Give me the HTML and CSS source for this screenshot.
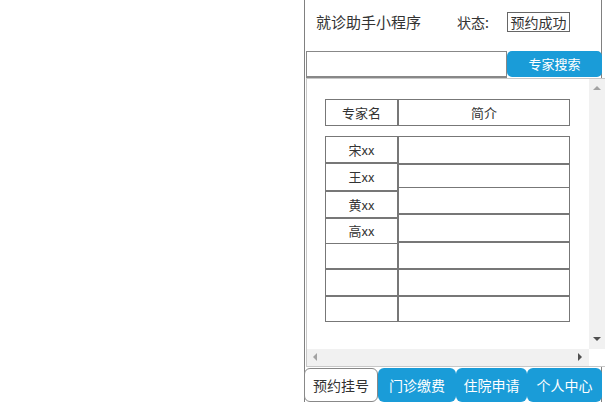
FILE: index.html
```html
<!DOCTYPE html>
<html lang="zh">
<head>
<meta charset="utf-8">
<title>就诊助手小程序</title>
<link rel="stylesheet" href="styles.css">
</head>
<body>
<div class="frame">
  <div class="header">
    <span class="title">就诊助手小程序</span>
    <span class="status-label">状态:</span>
    <span class="status-box">预约成功</span>
  </div>
  <div class="search">
    <input class="search-input" type="text">
    <button class="search-btn">专家搜索</button>
  </div>
  <div class="scroll">
    <div class="content">
      <div class="thead">
        <div class="cell c1 h">专家名</div>
        <div class="cell c2 h">简介</div>
      </div>
      <div class="tbody">
        <div class="col col1">
          <div class="cell r27">宋xx</div>
          <div class="cell r28">王xx</div>
          <div class="cell r27">黄xx</div>
          <div class="cell r26">高xx</div>
          <div class="cell r26 thin"></div>
          <div class="cell r27"></div>
          <div class="cell r26"></div>
        </div>
        <div class="col col2">
          <div class="cell r28"></div>
          <div class="cell r24"></div>
          <div class="cell r27 thin"></div>
          <div class="cell r28"></div>
          <div class="cell r27"></div>
          <div class="cell r27"></div>
          <div class="cell r26"></div>
        </div>
      </div>
    </div>
    <div class="vbar">
      <svg width="16" height="16" viewBox="0 0 16 16"><polygon points="4,10 12,10 8,6" fill="#a3a3a3"/></svg>
      <svg width="16" height="16" viewBox="0 0 16 16"><polygon points="4,6 12,6 8,10" fill="#505050"/></svg>
    </div>
    <div class="hbar">
      <svg width="16" height="17" viewBox="0 0 16 17"><polygon points="10,4 10,12 6,8" fill="#a3a3a3"/></svg>
      <svg width="16" height="17" viewBox="0 0 16 17"><polygon points="6,4 6,12 10,8" fill="#505050"/></svg>
    </div>
    <div class="corner"></div>
  </div>
  <div class="tabs">
    <div class="tab active t1">预约挂号</div>
    <div class="tab t2">门诊缴费</div>
    <div class="tab t3">住院申请</div>
    <div class="tab t4">个人中心</div>
  </div>
</div>
</body>
</html>
```
FILE: styles.css
```css
* { box-sizing: border-box; }
html, body { margin: 0; padding: 0; background: #fff; }
body {
  font-family: "Noto Sans CJK SC", "Liberation Sans", sans-serif;
  color: #333;
  width: 606px;
  height: 402px;
  overflow: hidden;
}
.frame {
  margin-left: 304px;
  width: 298px;
  height: 402px;
  border-left: 1px solid #808080;
  border-right: 1px solid #808080;
  display: flex;
  flex-direction: column;
}
.header {
  height: 51px;
  display: flex;
  align-items: flex-start;
  padding: 12px 0 0 11px;
  font-size: 14px;
  line-height: 20px;
}
.title { font-size: 15px; width: 141px; }
.status-label { width: 50px; }
.status-box {
  border: 1px solid #666;
  height: 20px;
  width: 63px;
  line-height: 18px;
  font-size: 14px;
  text-align: center;
}
.search {
  display: flex;
  height: 26px;
  margin-right: -1px;
}
.search-input {
  margin: 0 0 0 1px;
  width: 201px;
  height: 27px;
  border: 1px solid #888;
  border-bottom-width: 2px;
  padding: 0;
  outline: none;
}
.search-btn {
  flex: 1;
  height: 26px;
  border: none;
  border-radius: 5px;
  background: #1a9cd8;
  color: #fff;
  font-family: inherit;
  font-size: 13px;
  padding: 0;
}
.scroll {
  margin-top: 1px;
  margin-left: 1px;
  margin-right: -4px;
  height: 290px;
  border: 1px solid #c8c8c8;
  border-right: none;
  overflow: hidden;
  position: relative;
  background: #fff;
  display: grid;
  grid-template-columns: 1fr 16px;
  grid-template-rows: 1fr 17px;
}
.content { padding: 20px 0 0 18px; overflow: hidden; }
.vbar {
  background: #f1f1f1;
  display: flex;
  flex-direction: column;
  justify-content: space-between;
  padding: 1px 0 2px;
}
.vbar svg, .hbar svg { display: block; }
.hbar {
  background: #f1f1f1;
  display: flex;
  justify-content: space-between;
  padding: 0 1px 0 0;
}
.corner { background: #fff; }
.thead, .tbody { display: flex; }
.tbody { margin-top: 10px; }
.cell {
  border: 1px solid #777;
  font-size: 13px;
  display: flex;
  align-items: center;
  justify-content: center;
  color: #333;
}
.c1 { width: 73px; }
.c2 { width: 172px; }
.h { height: 27px; }
.col1 { width: 73px; }
.col2 { width: 172px; }
.col { display: flex; flex-direction: column; }
.r24 { height: 24px; }
.r26 { height: 26px; }
.r27 { height: 27px; }
.r28 { height: 28px; }
.thin { margin-top: -1px; }
.tabs {
  display: flex;
  height: 34px;
  margin-top: 1px;
  margin-right: -1px;
}
.tab {
  height: 34px;
  border-radius: 6px;
  background: #1a9cd8;
  color: #fff;
  font-size: 14px;
  display: flex;
  align-items: center;
  justify-content: center;
}
.tab.active {
  background: #fff;
  color: #333;
  border: 1px solid #888;
  margin-left: -1px;
}
.t1 { width: 74px; }
.t2 { width: 78px; }
.t3 { width: 71px; }
.t4 { width: 75px; }
```
